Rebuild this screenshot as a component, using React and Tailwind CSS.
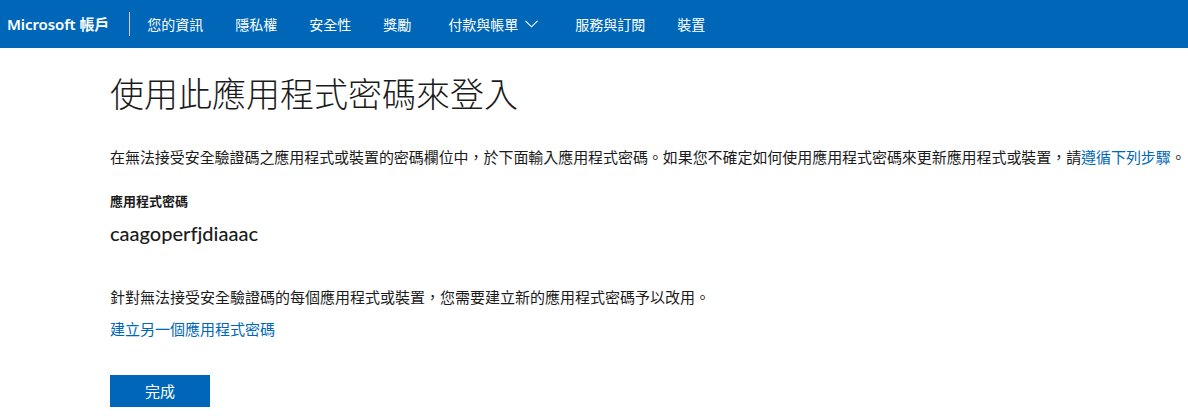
const font = {
  fontFamily:
    '"Segoe UI", "Noto Sans", "Noto Sans CJK TC", "Microsoft JhengHei", sans-serif',
};

const navItems = ["您的資訊", "隱私權", "安全性", "獎勵"];
const navTail = ["服務與訂閱", "裝置"];

const Chevron = () => (
  <svg width="13" height="8" viewBox="0 0 13 8" className="ml-[7px]">
    <polyline
      points="0.5,0.8 6.5,6.8 12.5,0.8"
      fill="none"
      stroke="white"
      strokeWidth="1.1"
    />
  </svg>
);

const Header = () => (
  <header className="h-12 bg-[#0067b8] text-white flex items-center">
    <a className="pl-[7px] text-[15px] font-semibold tracking-[-0.1px]">
      Microsoft 帳戶
    </a>
    <span className="ml-[20px] w-px h-6 bg-[#d9c9c4]" />
    <nav className="flex items-center h-full ml-[1px] text-[14px]">
      {navItems.map((item) => (
        <a key={item} className="px-4 h-full flex items-center">
          {item}
        </a>
      ))}
      <button className="px-[21px] h-full flex items-center">
        付款與帳單
        <Chevron />
      </button>
      {navTail.map((item) => (
        <a key={item} className="px-4 h-full flex items-center">
          {item}
        </a>
      ))}
    </nav>
  </header>
);

const App = () => {
  return (
    <div className="w-[1188px] h-[416px] bg-white text-[#1b1b1b] overflow-hidden" style={font}>
      <Header />
      <main className="pl-[110px] flex flex-col items-start">
        <h1 className="mt-[26px] text-[34px] leading-[41px] font-light">
          使用此應用程式密碼來登入
        </h1>
        <p className="mt-[32px] text-[15px] leading-5 whitespace-nowrap tracking-[-0.06px]">
          在無法接受安全驗證碼之應用程式或裝置的密碼欄位中，於下面輸入應用程式密碼。如果您不確定如何使用應用程式密碼來更新應用程式或裝置，請
          <a className="text-[#0067b8]">遵循下列步驟</a>。
        </p>
        <div className="mt-[25px] text-[13px] leading-[18px] font-bold">
          應用程式密碼
        </div>
        <div
          className="mt-[9px] text-[20px] leading-7 font-medium [font-variant-ligatures:none]"
          style={{ fontFamily: '"Segoe UI", Lato, sans-serif' }}
        >
          caagoperfjdiaaac
        </div>
        <p className="mt-[40px] text-[15px] leading-5">
          針對無法接受安全驗證碼的每個應用程式或裝置，您需要建立新的應用程式密碼予以改用。
        </p>
        <a className="mt-[12px] text-[15px] leading-5 text-[#0067b8]">
          建立另一個應用程式密碼
        </a>
        <button className="mt-[36px] w-[100px] h-8 bg-[#0067b8] text-white text-[15px]">
          完成
        </button>
      </main>
    </div>
  );
};

export default App;
